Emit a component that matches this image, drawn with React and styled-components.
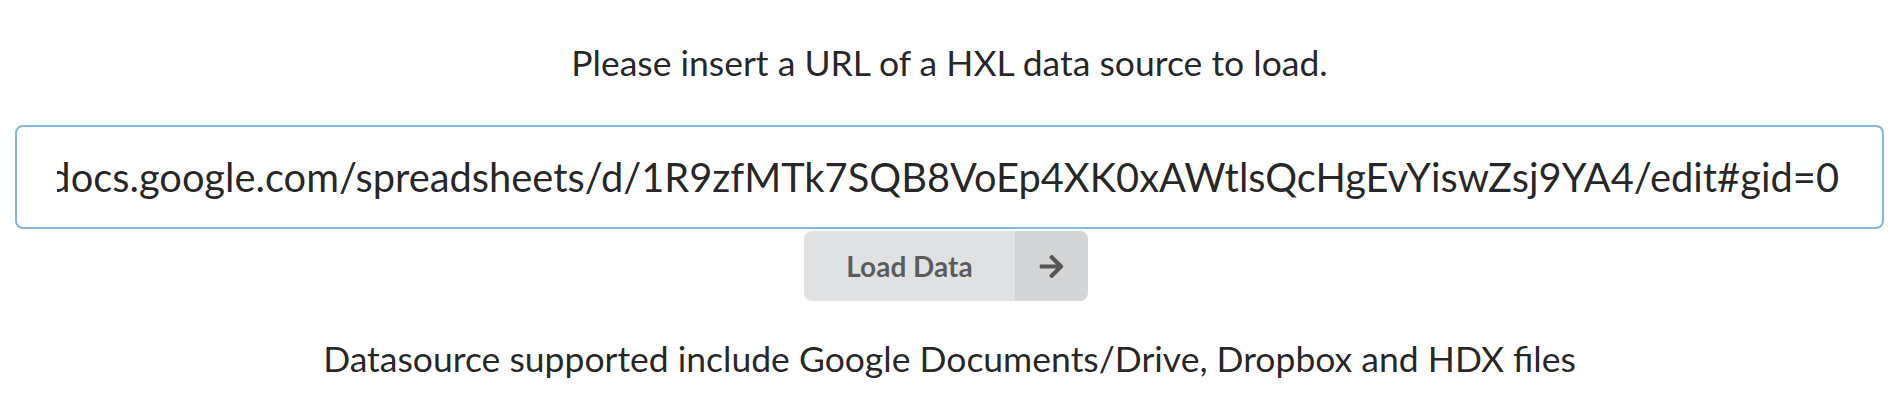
import React from 'react';
import styled, { createGlobalStyle } from 'styled-components';
import { FaArrowRight } from 'react-icons/fa';

const GlobalStyle = createGlobalStyle`
  body {
    margin: 0;
    background: #fff;
    font-family: Lato, "Open Sans", sans-serif;
    color: rgba(0, 0, 0, 0.87);
  }
`;

const Page = styled.div`
  display: flex;
  flex-direction: column;
  align-items: center;
  padding: 41px 16px 0 15px;
`;

const Prompt = styled.p`
  margin: 0;
  font-size: 35.5px;
  line-height: 43px;
`;

const UrlField = styled.div`
  align-self: stretch;
  box-sizing: border-box;
  height: 104px;
  margin-top: 41px;
  padding: 0 43px 0 40px;
  border: 2px solid #85b7d9;
  border-radius: 8px;
  display: flex;
  align-items: center;
`;

const UrlText = styled.div`
  flex: 1;
  display: flex;
  justify-content: flex-end;
  overflow: hidden;
  white-space: nowrap;
  font-size: 39.85px;
  line-height: 48px;
  color: rgba(0, 0, 0, 0.87);
`;

const LoadButton = styled.button`
  margin: 2px 7px 0 0;
  display: inline-flex;
  align-items: stretch;
  height: 70px;
  padding: 0;
  border: none;
  border-radius: 8px;
  overflow: hidden;
  background: #e0e1e2;
  color: rgba(0, 0, 0, 0.6);
  font-family: Lato, "Open Sans", sans-serif;
  cursor: pointer;
`;

const ButtonLabel = styled.span`
  display: flex;
  align-items: center;
  padding: 0 42px 0 42px;
  font-size: 28px;
  font-weight: 700;
`;

const ButtonIcon = styled.span`
  display: flex;
  align-items: center;
  justify-content: center;
  width: 73px;
  background: rgba(0, 0, 0, 0.05);
  font-size: 27px;
`;

const Note = styled.p`
  margin: 36px 0 0;
  font-size: 35.5px;
  line-height: 43px;
`;

const url = 'https://docs.google.com/spreadsheets/d/1R9zfMTk7SQB8VoEp4XK0xAWtlsQcHgEvYiswZsj9YA4/edit#gid=0';

export default function App() {
  return (
    <>
      <GlobalStyle />
      <Page>
        <Prompt>Please insert a URL of a HXL data source to load.</Prompt>
        <UrlField>
          <UrlText>
            <span>{url}</span>
          </UrlText>
        </UrlField>
        <LoadButton type="button">
          <ButtonLabel>Load Data</ButtonLabel>
          <ButtonIcon>
            <FaArrowRight />
          </ButtonIcon>
        </LoadButton>
        <Note>Datasource supported include Google Documents/Drive, Dropbox and HDX files</Note>
      </Page>
    </>
  );
}
